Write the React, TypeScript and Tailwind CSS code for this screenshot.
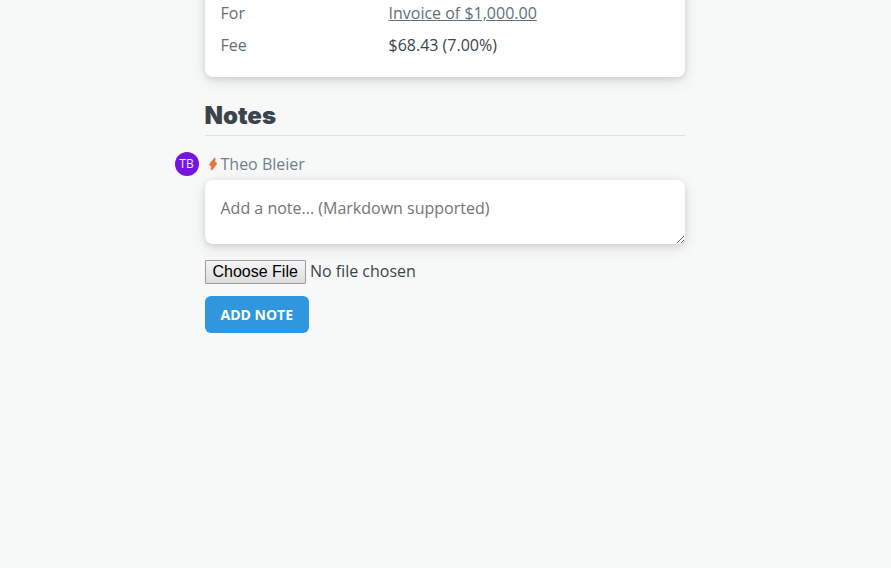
import React from "react";

function DetailRow({ label, children }: { label: string; children: React.ReactNode }) {
  return (
    <div className="flex py-1">
      <dt className="w-[168px] shrink-0 text-[#606f7b]">{label}</dt>
      <dd>{children}</dd>
    </div>
  );
}

function BoltIcon() {
  return (
    <svg viewBox="0 0 8 14" className="h-[14px] w-2 shrink-0" role="img" aria-label="Admin">
      <path
        d="M5.500 1 1 6.500C.3 7.500.3 8.200 1.300 8.500L2.400 8.800 2 12C2 13 2.800 13.200 3.500 12.400L7.200 7.500C7.800 6.500 7.700 5.700 6.800 5.400L5.800 5.200 6.200 1.900C6.200 1 5.900.7 5.500 1Z"
        fill="#e57438"
        stroke="#e57438"
        strokeWidth="0.700"
        strokeLinejoin="round"
      />
    </svg>
  );
}

export default function App() {
  return (
    <div className="min-h-screen overflow-hidden bg-[#f7f9f8] pr-[18px] pl-4 font-['Open_Sans','Noto_Sans',sans-serif] text-base leading-6 text-[#3c444b]">
      <main className="mx-auto w-full max-w-[480px]">
        <section className="-mt-[19px] rounded-lg bg-white p-4 shadow-[0_4px_16px_rgba(0,0,0,0.1),0_2px_6px_rgba(0,0,0,0.1)]">
          <dl>
            <DetailRow label="For">
              <a href="#invoice" className="text-[#606f7b] underline">Invoice of $1,000.00</a>
            </DetailRow>
            <DetailRow label="Fee">$68.43 (7.00%)</DetailRow>
          </dl>
        </section>

        <section>
          <h2 className="mt-6 border-b border-[#dae1e7] pb-1 font-['Inter',sans-serif] text-2xl leading-[30px] font-black">
            Notes
          </h2>
          <form className="mt-4" onSubmit={(event) => event.preventDefault()}>
            <div className="-ml-[30px] flex items-center">
              <span className="flex size-6 items-center justify-center rounded-full bg-[#7315dc] text-xs leading-6 text-white/90">
                TB
              </span>
              <span className="ml-[10px] flex items-center text-[#70808f]">
                <BoltIcon />
                <label htmlFor="note" className="ml-1">Theo Bleier</label>
              </span>
            </div>
            <textarea
              id="note"
              placeholder="Add a note... (Markdown supported)"
              className="mt-1 block h-16 w-full resize rounded-lg bg-white p-4 shadow-[0_4px_16px_rgba(0,0,0,0.1),0_2px_6px_rgba(0,0,0,0.1)] outline-none placeholder:text-[#757575]"
            />
            <input
              type="file"
              aria-label="Attach a file"
              className="mt-4 block h-6 w-full leading-5 file:mr-1 file:h-6 file:rounded-[1px] file:border file:border-solid file:border-[#a0989b] file:bg-linear-to-b file:from-[#f5f5f5] file:to-[#dddddd] file:px-[7px] file:font-['Liberation_Sans',Arial,sans-serif] file:text-base file:leading-5 file:text-black"
            />
            <button type="submit" className="mt-3 block rounded-md bg-[#3097df] px-4 py-2 text-sm leading-[21px] font-bold text-white uppercase">
              Add note
            </button>
          </form>
        </section>
      </main>
    </div>
  );
}
